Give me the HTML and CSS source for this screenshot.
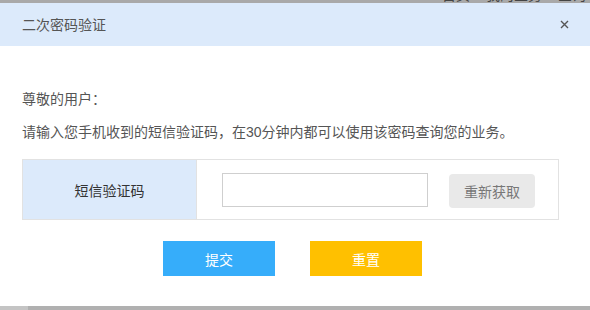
FILE: index.html
```html
<!DOCTYPE html>
<html lang="zh-CN">

<head>
    <meta charset="UTF-8">
    <title>二次密码验证</title>
    <link rel="stylesheet" href="styles.css">
</head>

<body>
    <div class="page">
        <!-- 背景页面顶部 -->
        <div class="top-strip">
            <div class="top-crumb">首页 &gt; 我的业务 &gt; 查询</div>
        </div>

        <div class="dialog">
            <div class="dialog-header">
                <span class="dialog-title">二次密码验证</span>
                <span class="dialog-close">
                    <svg width="9" height="9" viewBox="0 0 9 9">
                        <path d="M1 1 L8 8 M8 1 L1 8" stroke="#555" stroke-width="1.4" fill="none" />
                    </svg>
                </span>
            </div>

            <div class="dialog-body">
                <p class="greeting">尊敬的用户：</p>
                <p class="notice">请输入您手机收到的短信验证码，在30分钟内都可以使用该密码查询您的业务。</p>

                <div class="verify-row">
                    <div class="verify-label">短信验证码</div>
                    <div class="verify-field">
                        <input class="verify-input" type="text">
                        <button class="resend-btn">重新获取</button>
                    </div>
                </div>

                <div class="actions">
                    <button class="btn btn-submit">提交</button>
                    <button class="btn btn-reset">重置</button>
                </div>
            </div>
        </div>

        <div class="bottom-strip">
            <div class="bottom-left"></div>
        </div>
    </div>
</body>

</html>
```

FILE: styles.css
```css
html,
body {
    margin: 0;
    height: 100%;
}

body {
    font-family: "Liberation Sans", "Noto Sans CJK SC", sans-serif;
    font-size: 14px;
    color: #555;
    background: #fff;
}

.page {
    height: 310px;
    display: flex;
    flex-direction: column;
}

/* 背景页面 */
.top-strip {
    height: 3px;
    background: #a9a9a9;
    overflow: hidden;
}

.top-crumb {
    margin-top: -12px;
    line-height: 15px;
    text-align: right;
    padding-right: 4px;
    color: #444;
    white-space: nowrap;
}

.bottom-strip {
    height: 4px;
    background: #b0b0b0;
    display: flex;
}

.bottom-left {
    width: 28px;
    background: #c4c4c4;
}

/* 弹窗 */
.dialog {
    flex: 1;
    display: flex;
    flex-direction: column;
}

.dialog-header {
    height: 43px;
    background: #dceafb;
    display: flex;
    align-items: center;
    justify-content: space-between;
    padding: 0 21px 0 22px;
}

.dialog-title {
    font-size: 14px;
    color: #555;
    line-height: 20px;
}

.dialog-close {
    display: flex;
    cursor: pointer;
}

.dialog-body {
    padding: 43px 31px 0 22px;
}

.greeting,
.notice {
    margin: 0;
    line-height: 20px;
    color: #555;
}

.greeting {
    margin-bottom: 13px;
}

/* 验证码行 */
.verify-row {
    margin-top: 17px;
    height: 59px;
    border: 1px solid #e2e2e2;
    display: flex;
}

.verify-label {
    width: 173px;
    background: #dceafb;
    display: flex;
    align-items: center;
    justify-content: center;
    color: #333;
    border-right: 1px solid #e2e2e2;
}

.verify-field {
    flex: 1;
    display: flex;
    align-items: center;
    padding-left: 25px;
    gap: 21px;
}

.verify-input {
    width: 204px;
    height: 32px;
    margin: 0;
    padding: 0;
    border: 1px solid #cfcfcf;
    outline: none;
}

.resend-btn {
    width: 86px;
    height: 34px;
    margin-top: 2px;
    border: none;
    border-radius: 4px;
    background: #e9e9e9;
    color: #777;
    font-family: inherit;
    font-size: 14px;
    cursor: pointer;
}

/* 操作按钮 */
.actions {
    display: flex;
    gap: 35px;
    margin-top: 21px;
    padding-left: 141px;
}

.btn {
    width: 112px;
    height: 35px;
    border: none;
    color: #fff;
    font-family: inherit;
    font-size: 14px;
    cursor: pointer;
}

.btn-submit {
    background: #36adfa;
}

.btn-reset {
    background: #ffc000;
}
```
